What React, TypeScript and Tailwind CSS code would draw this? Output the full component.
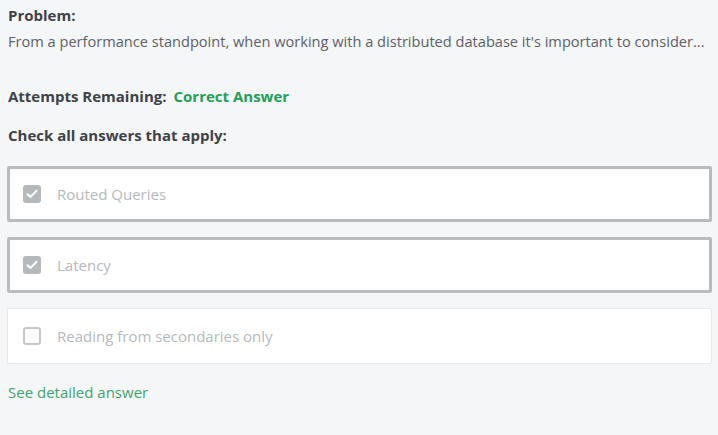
import React from "react";

const Check = ({ checked }: { checked: boolean }) =>
  checked ? (
    <span className="flex h-[18px] w-[18px] items-center justify-center rounded-[3px] bg-[#b4b9bd]">
      <svg width="12" height="10" viewBox="0 0 12 10" fill="none">
        <path d="M1.5 5.2 L4.5 8 L10.5 1.8" stroke="white" strokeWidth="2" strokeLinecap="round" strokeLinejoin="round" />
      </svg>
    </span>
  ) : (
    <span className="block h-[18px] w-[18px] rounded-[3px] border-2 border-[#c4c7ca] bg-white" />
  );

const Option = ({ label, checked }: { label: string; checked: boolean }) => (
  <div
    className={
      checked
        ? "flex h-[56px] items-center rounded-[2px] border-[3px] border-[#b8bcbf] bg-white pl-[13px]"
        : "flex h-[56px] items-center rounded-[2px] border border-[#e6e8ea] bg-white pl-[15px]"
    }
  >
    <Check checked={checked} />
    <span className="ml-[16px] text-[15px] text-[#b5b9bd]">{label}</span>
  </div>
);

export default function App() {
  return (
    <div
      className="h-[435px] w-[718px] bg-[#f5f6f7] px-[7px] pt-[4px]"
      style={{ fontFamily: "'Open Sans', Lato, sans-serif" }}
    >
      <div className="pl-px text-[15px] font-bold leading-[22px] text-[#3e4249]">Problem:</div>
      <div className="mt-[4px] pl-px text-[14.6px] leading-[22px] text-[#5d6168] whitespace-nowrap">
        From a performance standpoint, when working with a distributed database it's important to consider...
      </div>
      <div className="mt-[33px] flex pl-px text-[15px] font-bold leading-[22px]">
        <span className="text-[#3e4249]">Attempts Remaining:</span>
        <span className="ml-[7px] text-[#21a058]">Correct Answer</span>
      </div>
      <div className="mt-[17px] pl-px text-[15px] font-bold leading-[22px] text-[#3e4249]">
        Check all answers that apply:
      </div>
      <div className="mt-[20px] flex w-[705px] flex-col gap-[15px]">
        <Option label="Routed Queries" checked />
        <Option label="Latency" checked />
        <Option label="Reading from secondaries only" checked={false} />
      </div>
      <div className="mt-[17px] pl-px text-[15px] leading-[22px] text-[#3fa46c]">See detailed answer</div>
    </div>
  );
}
